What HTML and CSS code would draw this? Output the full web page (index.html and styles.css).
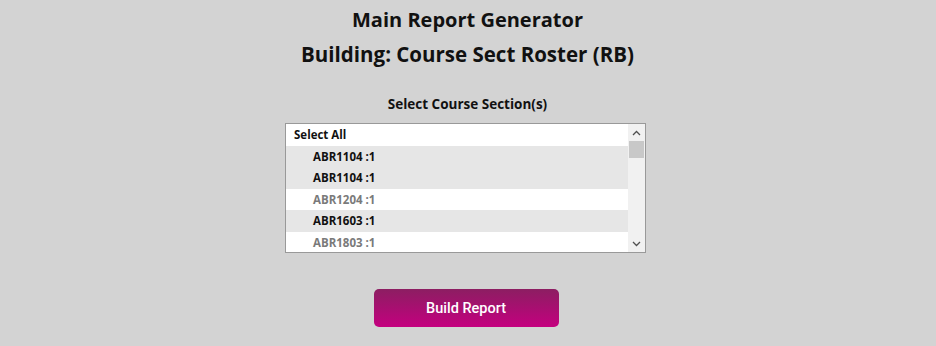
FILE: index.html
```html
<!DOCTYPE html>
<html>
<head>
<meta charset="utf-8">
<link rel="stylesheet" href="styles.css">
</head>
<body>
<div class="page">
  <h1 class="title">Main Report Generator</h1>
  <h2 class="subtitle">Building: Course Sect Roster (RB)</h2>
  <div class="label">Select Course Section(s)</div>
  <div class="listbox">
    <div class="items">
      <div class="row all">Select All</div>
      <div class="row sel">ABR1104 :1</div>
      <div class="row sel">ABR1104 :1</div>
      <div class="row dim">ABR1204 :1</div>
      <div class="row sel">ABR1603 :1</div>
      <div class="row dim">ABR1803 :1</div>
    </div>
    <div class="scrollbar">
      <div class="arrow up"><svg width="9" height="6" viewBox="0 0 9 6"><path d="M1 5 L4.5 1.5 L8 5" fill="none" stroke="#505050" stroke-width="1.3"/></svg></div>
      <div class="track"><div class="thumb"></div></div>
      <div class="arrow down"><svg width="9" height="6" viewBox="0 0 9 6"><path d="M1 1 L4.5 4.5 L8 1" fill="none" stroke="#505050" stroke-width="1.3"/></svg></div>
    </div>
  </div>
  <button class="build">Build Report</button>
</div>
</body>
</html>
```
FILE: styles.css
```css
html, body {
  margin: 0;
  padding: 0;
  background: #d3d3d3;
}
.page {
  display: flex;
  flex-direction: column;
  align-items: center;
  font-family: "Open Sans", "Noto Sans", sans-serif;
  color: #111;
}
.title {
  margin: 7px 1px 0 0;
  font-size: 20px;
  font-weight: 700;
  line-height: 26px;
}
.subtitle {
  margin: 8px 1px 0 0;
  font-size: 20.5px;
  font-weight: 700;
  line-height: 26px;
}
.label {
  margin: 29px 1px 0 0;
  font-size: 13.5px;
  font-weight: 700;
  line-height: 16px;
}
.listbox {
  margin: 11px 5px 0 0;
  width: 359px;
  height: 128px;
  border: 1px solid #999;
  background: #fff;
  display: flex;
  overflow: hidden;
}
.items {
  flex: 1;
  display: flex;
  flex-direction: column;
}
.row {
  height: 21.5px;
  line-height: 21.5px;
  font-size: 11.5px;
  font-weight: 700;
  padding-left: 27px;
  flex-shrink: 0;
}
.row.all {
  padding-left: 8px;
  background: #fff;
  color: #111;
}
.row.sel {
  background: #e6e6e6;
  color: #111;
}
.row.dim {
  background: #fff;
  color: #7a7a7a;
}
.scrollbar {
  width: 17px;
  background: #f1f1f1;
  display: flex;
  flex-direction: column;
}
.arrow {
  height: 17px;
  display: flex;
  align-items: center;
  justify-content: center;
}
.track {
  flex: 1;
}
.thumb {
  margin: 0 1px;
  height: 17px;
  background: #c8c8c8;
}
.build {
  margin: 36px 4px 0 0;
  width: 185px;
  height: 38px;
  border: none;
  border-radius: 5px;
  background: linear-gradient(to bottom, #8c1e62, #c4007f);
  color: #fff;
  font-family: "Roboto", "Liberation Sans", Arial, sans-serif;
  font-size: 14.5px;
  font-weight: 500;
  padding: 0;
}
```
